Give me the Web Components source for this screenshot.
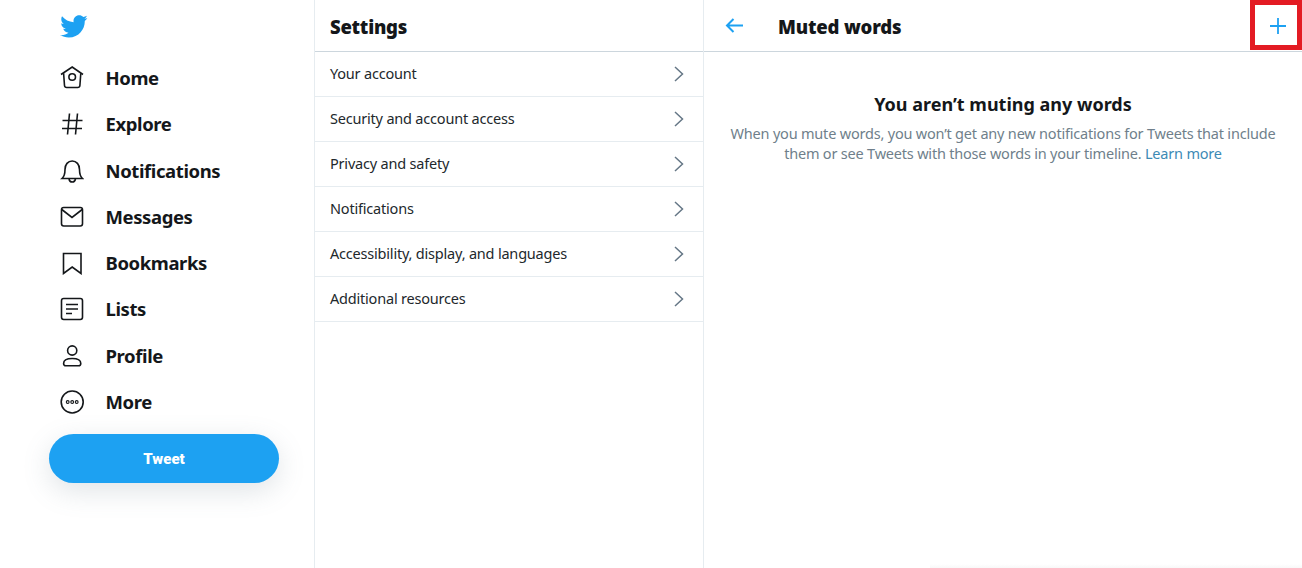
<!DOCTYPE html>
<html>
<head>
<meta charset="utf-8">
<title>Muted words</title>
<style>
    html, body { margin: 0; height: 100%; background: #fff; overflow: hidden; }
    body { font-family: "Noto Sans", "Open Sans", sans-serif; color: #14171a; }
</style>
</head>
<body>
<app-shell>
    <side-nav slot="nav"></side-nav>
    <settings-list slot="list"></settings-list>
    <muted-words slot="detail"></muted-words>
</app-shell>

<script>
const icons = {
    home: '<path d="M1 8.5 12.2 1 23 8.5"/><path d="M3.6 7.2 4.5 19.5Q4.7 21.5 6.7 21.5H17.7Q19.7 21.5 19.9 19.5L20.8 7.2"/><circle cx="12.2" cy="11" r="3.3"/>',
    hash: '<path d="M2.5 8.5H22.5M2 16.5H22M9.5 1.5 7.5 22.5M17.5 1.5 15.5 22.5"/>',
    bell: '<path d="M2 19.5H22.5C19.5 17 19.5 14 19.5 10.5 19.5 5.5 16.5 2 12.2 2S5 5.5 5 10.5C5 14 5 17 2 19.5Z"/><path d="M9 20Q9.5 23 12.2 23T15.5 20"/>',
    mail: '<rect x="1.5" y="2.5" width="21" height="18.5" rx="2.2"/><path d="M1.8 4.5 12 12.5 22.2 4.5"/>',
    mark: '<path d="M3.5 2.5H21V22.5L12.2 16 3.5 22.5Z"/>',
    list: '<rect x="1.5" y="1.5" width="21" height="21" rx="2.2"/><path d="M6 7.5H18M6 12H18M6 16.5H12"/>',
    user: '<circle cx="12.2" cy="6.5" r="4.6"/><path d="M3.6 19.5C3.6 16 7.5 14.5 12.2 14.5S20.8 16 20.8 19.5C20.8 21 20 21.8 18.5 21.8H6C4.5 21.8 3.6 21 3.6 19.5Z"/>',
    more: '<circle cx="12.2" cy="12" r="11"/><g stroke-width="1.1"><circle cx="7.7" cy="12" r="1.4"/><circle cx="12.2" cy="12" r="1.4"/><circle cx="16.7" cy="12" r="1.4"/></g>'
};

class AppShell extends HTMLElement {
    constructor() {
        super();
        this.attachShadow({mode: 'open'});
        this.shadowRoot.innerHTML = `
            <style>
                :host { display: grid; grid-template-columns: 315px 389px 598px; height: 568px; }
                ::slotted(*) { min-width: 0; }
            </style>
            <slot name="nav"></slot>
            <slot name="list"></slot>
            <slot name="detail"></slot>
        `;
    }
}

class NavItem extends HTMLElement {
    constructor() {
        super();
        this.attachShadow({mode: 'open'});
        this.shadowRoot.innerHTML = `
            <style>
                :host { display: flex; align-items: center; height: 46.25px; gap: 21.5px; }
                svg { width: 24px; height: 24px; fill: none; stroke: #14171a; stroke-width: 1.6; flex: none; }
                span { font-size: 18.5px; font-weight: 700; letter-spacing: -0.4px; color: #14171a; padding-bottom: 1px; }
            </style>
            <svg viewBox="0 0 24 24">${icons[this.getAttribute('icon')]}</svg>
            <span><slot></slot></span>
        `;
    }
}

class SideNav extends HTMLElement {
    constructor() {
        super();
        this.attachShadow({mode: 'open'});
        this.shadowRoot.innerHTML = `
            <style>
                :host { display: flex; flex-direction: column; box-sizing: border-box; border-right: 1px solid #e6ecf0; padding: 0 35px 0 49px; }
                .logo { width: 29px; height: 29px; fill: #1da1f2; margin: 12px 0 0 9.5px; display: block; }
                nav { display: flex; flex-direction: column; margin: 14px 0 0 11px; }
                button {
                    margin-top: 9px; height: 49px; width: 230px; border: 0; border-radius: 25px;
                    background: #1da1f2; color: #fff; font: 900 15px Roboto, sans-serif;
                    box-shadow: 0 8px 28px rgba(101, 119, 134, .2);
                }
            </style>
            <svg class="logo" viewBox="0 0 24 24"><path d="M23.643 4.937c-.835.37-1.732.62-2.675.733.962-.576 1.7-1.49 2.048-2.578-.9.534-1.897.922-2.958 1.13-.85-.904-2.06-1.47-3.4-1.47-2.572 0-4.658 2.086-4.658 4.66 0 .364.042.718.12 1.06-3.873-.195-7.304-2.05-9.602-4.868-.4.69-.63 1.49-.63 2.342 0 1.616.823 3.043 2.072 3.878-.764-.025-1.482-.234-2.11-.583v.06c0 2.257 1.605 4.14 3.737 4.568-.392.106-.803.162-1.227.162-.3 0-.593-.028-.877-.082.593 1.85 2.313 3.198 4.352 3.234-1.595 1.25-3.604 1.995-5.786 1.995-.376 0-.747-.022-1.112-.065 2.062 1.323 4.51 2.093 7.14 2.093 8.57 0 13.255-7.098 13.255-13.254 0-.2-.005-.402-.014-.602.91-.658 1.7-1.477 2.323-2.41z"/></svg>
            <nav>
                <nav-item icon="home">Home</nav-item>
                <nav-item icon="hash">Explore</nav-item>
                <nav-item icon="bell">Notifications</nav-item>
                <nav-item icon="mail">Messages</nav-item>
                <nav-item icon="mark">Bookmarks</nav-item>
                <nav-item icon="list">Lists</nav-item>
                <nav-item icon="user">Profile</nav-item>
                <nav-item icon="more">More</nav-item>
            </nav>
            <button>Tweet</button>
        `;
    }
}

class SettingsRow extends HTMLElement {
    constructor() {
        super();
        this.attachShadow({mode: 'open'});
        this.shadowRoot.innerHTML = `
            <style>
                :host { display: flex; align-items: center; justify-content: space-between; box-sizing: border-box; height: 45px; padding: 0 19px 0 15px; border-bottom: 1px solid #e6ecf0; font-size: 14.5px; letter-spacing: -0.2px; color: #22282c; }
                span { padding-bottom: 2px; }
                svg { width: 12px; height: 16px; fill: none; stroke: #657786; stroke-width: 1.5; }
            </style>
            <span><slot></slot></span>
            <svg viewBox="0 0 12 16"><path d="M3 1 10.5 8 3 15"/></svg>
        `;
    }
}

class SettingsList extends HTMLElement {
    constructor() {
        super();
        this.attachShadow({mode: 'open'});
        this.shadowRoot.innerHTML = `
            <style>
                :host { display: block; border-right: 1px solid #e6ecf0; }
                header { box-sizing: border-box; height: 52px; padding: 2px 15px 0; display: flex; align-items: center; border-bottom: 1px solid #ccd6dd; font-size: 18.5px; font-weight: 900; letter-spacing: -0.25px; color: #14171a; }
            </style>
            <header>Settings</header>
            <settings-row>Your account</settings-row>
            <settings-row>Security and account access</settings-row>
            <settings-row>Privacy and safety</settings-row>
            <settings-row>Notifications</settings-row>
            <settings-row>Accessibility, display, and languages</settings-row>
            <settings-row>Additional resources</settings-row>
        `;
    }
}

class MutedWords extends HTMLElement {
    constructor() {
        super();
        this.attachShadow({mode: 'open'});
        this.shadowRoot.innerHTML = `
            <style>
                :host { display: block; position: relative; overflow: hidden; }
                header { box-sizing: border-box; height: 52px; display: flex; align-items: center; padding: 0 15px 0 21px; border-bottom: 1px solid #ccd6dd; font-size: 18.5px; font-weight: 900; letter-spacing: -0.17px; color: #14171a; }
                header span { padding-top: 2px; }
                header svg { fill: none; stroke: #1da1f2; flex: none; }
                .back { width: 20px; height: 20px; margin-right: 33px; stroke-width: 2; }
                .add { width: 18px; height: 18px; margin-left: auto; stroke-width: 1.8; }
                .mark { position: absolute; top: 0; right: 0; width: 52px; height: 50px; box-sizing: border-box; border: 5px solid #e31b23; }
                .empty { padding: 40px 24px 0; text-align: center; }
                h2 { margin: 0 0 7px; font-size: 18px; line-height: 24px; font-weight: 700; color: #14171a; }
                p { margin: 0; font-size: 14.5px; line-height: 20px; color: #6f7f8b; letter-spacing: -0.2px; }
                a { color: #3d8ab5; text-decoration: none; }
                .fade { position: absolute; left: 226px; right: 0; bottom: 0; height: 4px; background: linear-gradient(#fff, #f8f8f8); }
            </style>
            <header>
                <svg class="back" viewBox="0 0 20 20"><path d="M18 9.5H2M8.5 3 2 9.5 8.5 16"/></svg>
                <span>Muted words</span>
                <svg class="add" viewBox="0 0 18 18"><path d="M9 1V17M1 9H17"/></svg>
            </header>
            <div class="mark"></div>
            <div class="empty">
                <h2>You aren’t muting any words</h2>
                <p>When you mute words, you won’t get any new notifications for Tweets that include them or see Tweets with those words in your timeline. <a href="#">Learn more</a></p>
            </div>
            <div class="fade"></div>
        `;
    }
}

customElements.define('app-shell', AppShell);
customElements.define('nav-item', NavItem);
customElements.define('side-nav', SideNav);
customElements.define('settings-row', SettingsRow);
customElements.define('settings-list', SettingsList);
customElements.define('muted-words', MutedWords);
</script>
</body>
</html>
